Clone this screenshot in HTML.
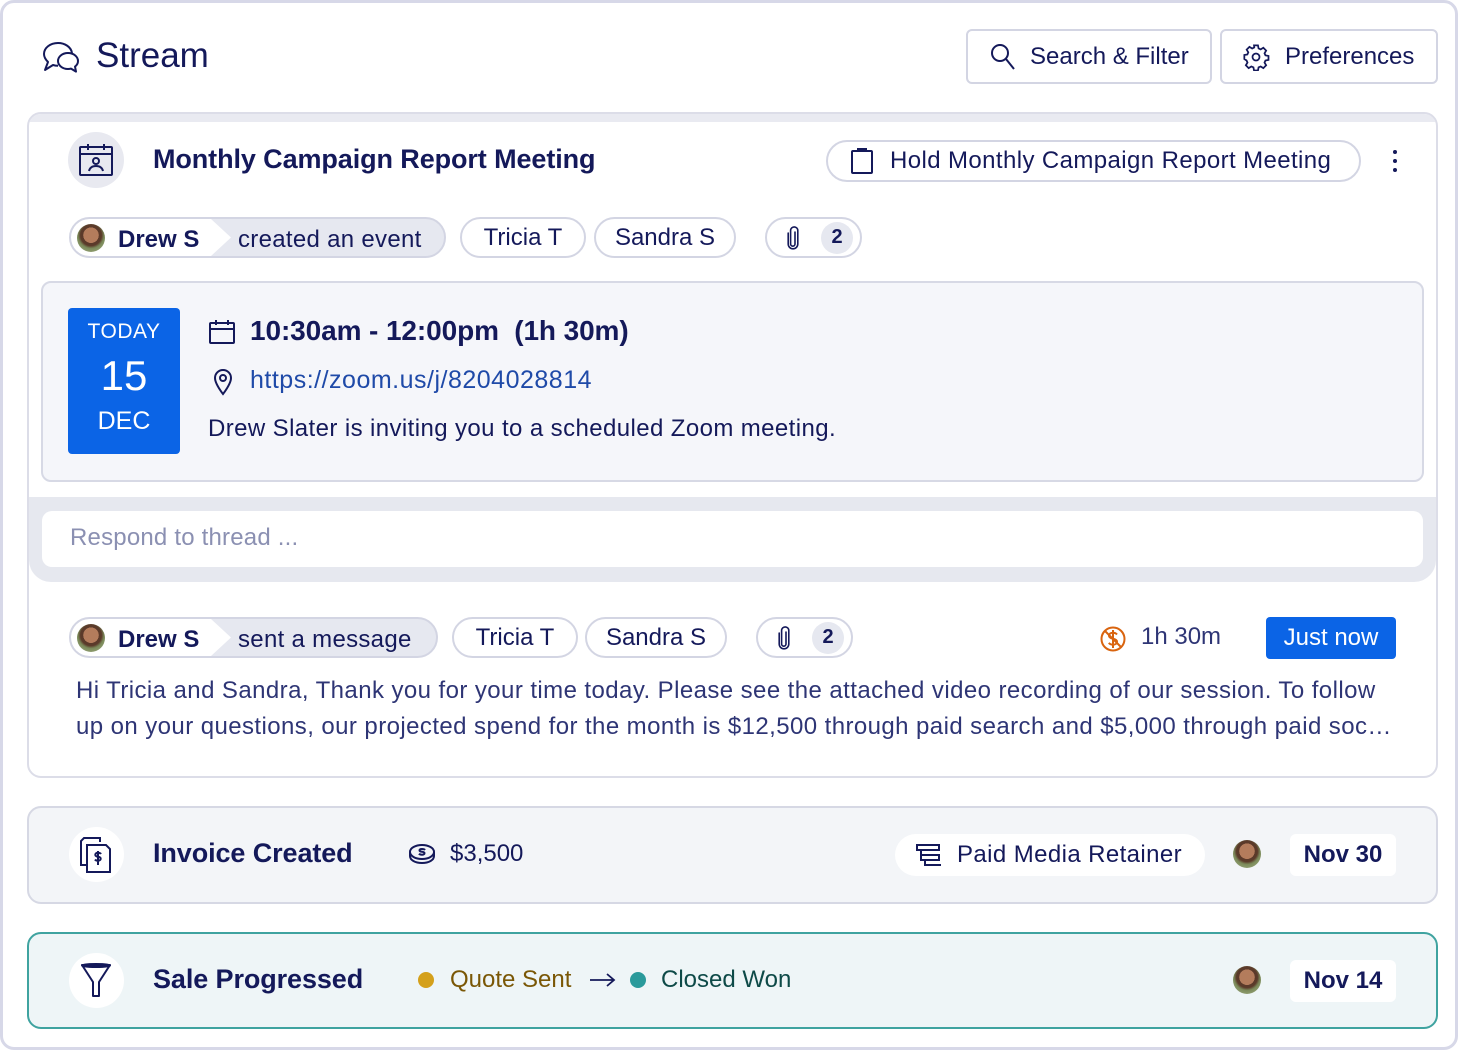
<!DOCTYPE html>
<html><head><meta charset="utf-8">
<style>
*{box-sizing:border-box;margin:0;padding:0}
body{width:1458px;height:1050px;background:#fff;font-family:"Liberation Sans",Arial,sans-serif;color:#14195a;position:relative;overflow:hidden}
.a{position:absolute}
.frame{left:0;top:0;width:1458px;height:1050px;border:3px solid #d7d8e8;border-radius:14px}
.btn{border:2px solid #d3d5e3;border-radius:6px;background:#fff;display:flex;align-items:center;font-size:24px;color:#14195a}
.pill{border:2px solid #d3d5e3;border-radius:22px;background:#fff;display:flex;align-items:center;font-size:24px;color:#14195a;height:41px}
.card{border:2px solid #dcdde8;border-radius:14px}
.av{border-radius:50%;background:radial-gradient(circle at 50% 40%,#b47c5c 0 35%,#5b3a2a 36% 48%,#7b8a5a 60%,#a8b48a 100%)}
.t{white-space:nowrap}
</style></head><body>
<div class="a frame"></div>

<svg class="a" style="left:42px;top:40px" width="40" height="34" viewBox="0 0 40 34" fill="none" stroke="#14195a" stroke-width="2" stroke-linejoin="round">
<path d="M16 3C8 3 2 8 2 14c0 3 2 6 4 8l-3 8 8-5c2 .6 3 .8 5 .8"/>
<path d="M16 3c7 0 13 4 14 10"/>
<path d="M26 13c-6 0-10 4-10 8s4 8 10 8c1 0 2 0 3-.4l5 3-1-5c2-1.5 3-3.5 3-5.6 0-4-4-8-10-8z"/>
</svg>
<div class="a t" style="left:96px;top:36px;font-size:35px">Stream</div>

<div class="a btn" style="left:966px;top:29px;width:246px;height:55px">
<svg style="margin-left:22px" width="26" height="28" viewBox="0 0 26 28" fill="none" stroke="#14195a" stroke-width="2"><circle cx="10" cy="10" r="8"/><path d="M16 16l8 10"/></svg>
<span style="margin-left:14px">Search &amp; Filter</span></div>
<div class="a btn" style="left:1220px;top:29px;width:218px;height:55px">
<svg style="margin-left:20px" width="28" height="28" viewBox="0 0 24 24" fill="none" stroke="#14195a" stroke-width="1.5"><circle cx="12" cy="12" r="3"/><path d="M10.3 2h3.4l.5 2.6 1.8.9 2.3-1.4 2.4 2.4-1.4 2.3.8 1.8 2.6.5v3.4l-2.6.5-.8 1.8 1.4 2.3-2.4 2.4-2.3-1.4-1.8.8-.5 2.7h-3.4l-.5-2.7-1.8-.8-2.3 1.4-2.4-2.4 1.4-2.3-.8-1.8L2 13.7v-3.4l2.6-.5.8-1.8L4 5.7l2.4-2.4 2.3 1.4 1.8-.9z"/></svg>
<span style="margin-left:15px">Preferences</span></div>

<div class="a card" style="left:27px;top:112px;width:1411px;height:666px;background:#fff;overflow:hidden">
 <div class="a" style="left:0;top:0;width:100%;height:8px;background:#e9eaf1"></div>
 <div class="a" style="left:0;top:383px;width:100%;height:85px;background:#e6e8ef;border-radius:0 0 22px 22px"></div>
</div>
<div class="a" style="left:68px;top:132px;width:56px;height:56px;border-radius:50%;background:#e8e9f0"></div>
<svg class="a" style="left:78px;top:143px" width="36" height="34" viewBox="0 0 36 34" fill="none" stroke="#14195a" stroke-width="2"><rect x="2" y="4" width="32" height="28" rx="1"/><path d="M2 11h32M10 1v6M26 1v6"/><circle cx="18" cy="18" r="3"/><path d="M11 28c1-4 4-5 7-5s6 1 7 5"/></svg>
<div class="a t" style="left:153px;top:144px;font-size:27px;font-weight:bold;letter-spacing:-0.1px">Monthly Campaign Report Meeting</div>

<div class="a pill" style="left:826px;top:140px;width:535px;height:42px">
<svg style="margin-left:22px" width="24" height="28" viewBox="0 0 24 28" fill="none" stroke="#14195a" stroke-width="2"><rect x="2" y="4" width="20" height="22" rx="1"/><path d="M8 4V2h8v2"/></svg>
<span style="margin-left:16px;letter-spacing:0.4px">Hold Monthly Campaign Report Meeting</span></div>
<div class="a" style="left:1393px;top:150px;width:4px;height:4px;border-radius:50%;background:#14195a;box-shadow:0 9px 0 #14195a,0 18px 0 #14195a"></div>

<div class="a pill" style="left:69px;top:217px;width:377px;background:#e6e8f0;overflow:hidden">
 <div class="a" style="left:0;top:0;width:160px;height:100%;background:#fff;clip-path:polygon(0 0,140px 0,160px 50%,140px 100%,0 100%);border-radius:20px 0 0 20px"></div>
 <div class="a av" style="left:6px;top:5px;width:28px;height:28px"></div>
 <span class="a t" style="left:47px;top:7px;font-weight:bold">Drew S</span>
 <span class="a t" style="left:167px;top:7px;letter-spacing:0.3px">created an event</span>
</div>
<div class="a pill" style="left:460px;top:217px;width:126px;justify-content:center">Tricia T</div>
<div class="a pill" style="left:594px;top:217px;width:142px;justify-content:center">Sandra S</div>
<div class="a pill" style="left:765px;top:217px;width:97px">
<svg style="margin-left:18px" width="16" height="26" viewBox="0 0 16 26" fill="none" stroke="#14195a" stroke-width="1.6" stroke-linecap="round"><path d="M10 7v12a2.2 2.2 0 0 1-4.4 0V5.5a3.6 3.6 0 0 1 7.2 0V19a4.8 4.8 0 0 1-9.6 0V8"/></svg>
<span style="margin-left:20px;width:32px;height:32px;border-radius:50%;background:#e6e8f0;display:flex;align-items:center;justify-content:center;font-size:20px;font-weight:bold">2</span></div>

<div class="a" style="left:41px;top:281px;width:1383px;height:201px;background:#f5f6fa;border:2px solid #d7d9e5;border-radius:10px"></div>
<div class="a" style="left:68px;top:308px;width:112px;height:146px;background:#0b64e6;border-radius:4px;color:#fff;text-align:center">
 <div style="font-size:21px;margin-top:12px;line-height:24px;letter-spacing:0.5px">TODAY</div>
 <div style="font-size:42px;margin-top:10px;line-height:44px">15</div>
 <div style="font-size:25px;margin-top:9px;line-height:28px">DEC</div>
</div>
<svg class="a" style="left:208px;top:319px" width="28" height="26" viewBox="0 0 28 26" fill="none" stroke="#14195a" stroke-width="2"><rect x="2" y="4" width="24" height="20" rx="1"/><path d="M2 10h24M8 1v5M20 1v5"/></svg>
<div class="a t" style="left:250px;top:315px;font-size:28px;font-weight:bold;letter-spacing:-0.1px">10:30am - 12:00pm &nbsp;(1h 30m)</div>
<svg class="a" style="left:212px;top:368px" width="22" height="28" viewBox="0 0 22 28" fill="none" stroke="#14195a" stroke-width="2"><path d="M11 26S3 16 3 10a8 8 0 0 1 16 0c0 6-8 16-8 16z"/><circle cx="11" cy="10" r="3"/></svg>
<div class="a t" style="left:250px;top:366px;font-size:25px;color:#1f4aa8;letter-spacing:0.5px">https://zoom.us/j/8204028814</div>
<div class="a t" style="left:208px;top:415px;font-size:24px;letter-spacing:0.4px">Drew Slater is inviting you to a scheduled Zoom meeting.</div>

<div class="a" style="left:42px;top:511px;width:1381px;height:56px;background:#fff;border-radius:10px"></div>
<div class="a t" style="left:70px;top:524px;font-size:24px;color:#8b90b2;letter-spacing:0.2px">Respond to thread ...</div>

<div class="a pill" style="left:69px;top:617px;width:369px;background:#e6e8f0;overflow:hidden">
 <div class="a" style="left:0;top:0;width:160px;height:100%;background:#fff;clip-path:polygon(0 0,140px 0,160px 50%,140px 100%,0 100%);border-radius:20px 0 0 20px"></div>
 <div class="a av" style="left:6px;top:5px;width:28px;height:28px"></div>
 <span class="a t" style="left:47px;top:7px;font-weight:bold">Drew S</span>
 <span class="a t" style="left:167px;top:7px;letter-spacing:0.3px">sent a message</span>
</div>
<div class="a pill" style="left:452px;top:617px;width:126px;justify-content:center">Tricia T</div>
<div class="a pill" style="left:585px;top:617px;width:142px;justify-content:center">Sandra S</div>
<div class="a pill" style="left:756px;top:617px;width:97px">
<svg style="margin-left:18px" width="16" height="26" viewBox="0 0 16 26" fill="none" stroke="#14195a" stroke-width="1.6" stroke-linecap="round"><path d="M10 7v12a2.2 2.2 0 0 1-4.4 0V5.5a3.6 3.6 0 0 1 7.2 0V19a4.8 4.8 0 0 1-9.6 0V8"/></svg>
<span style="margin-left:20px;width:32px;height:32px;border-radius:50%;background:#e6e8f0;display:flex;align-items:center;justify-content:center;font-size:20px;font-weight:bold">2</span></div>
<svg class="a" style="left:1099px;top:625px" width="28" height="28" viewBox="0 0 28 28" fill="none" stroke="#d9640f" stroke-width="2"><circle cx="14" cy="14" r="11.5"/><path d="M6 6l16 16"/><path d="M18 9.5c-1-1.3-2.5-1.8-4-1.8-2.4 0-4 1.2-4 3s1.6 2.5 4 3 4 1.3 4 3-1.6 3-4 3c-1.7 0-3.2-.6-4.2-1.8M14 5v18"/></svg>
<div class="a t" style="left:1141px;top:623px;font-size:24px;color:#2e3575">1h 30m</div>
<div class="a" style="left:1266px;top:617px;width:130px;height:42px;background:#0b64e6;border-radius:4px;color:#fff;font-size:24px;display:flex;align-items:center;justify-content:center">Just now</div>
<div class="a" style="left:76px;top:673px;width:1330px;font-size:24px;line-height:36px;color:#2e3575;white-space:nowrap;overflow:hidden;text-overflow:ellipsis;letter-spacing:0.42px">Hi Tricia and Sandra, Thank you for your time today. Please see the attached video recording of our session. To follow</div>
<div class="a" style="left:76px;top:709px;width:1318px;font-size:24px;line-height:36px;color:#2e3575;white-space:nowrap;overflow:hidden;text-overflow:ellipsis;letter-spacing:0.42px">up on your questions, our projected spend for the month is $12,500 through paid search and $5,000 through paid social media.</div>

<div class="a card" style="left:27px;top:806px;width:1411px;height:98px;background:#f3f5f8;border-color:#d6d8e4"></div>
<div class="a" style="left:69px;top:827px;width:55px;height:55px;border-radius:50%;background:#fff"></div>
<svg class="a" style="left:80px;top:836px" width="32" height="38" viewBox="0 0 32 38" fill="none" stroke="#14195a" stroke-width="2"><path d="M20 6V2H4l-3 3v24h6"/><path d="M7 9h19l4 4v23H7z"/><path d="M21 18c-.6-1-1.7-1.3-3-1.3-1.6 0-2.7.8-2.7 2s1 1.7 2.7 2 2.7.9 2.7 2-1.1 2-2.7 2c-1.3 0-2.4-.4-3-1.2M18 15v14"/></svg>
<div class="a t" style="left:153px;top:838px;font-size:27px;font-weight:bold;letter-spacing:-0.1px">Invoice Created</div>
<svg class="a" style="left:408px;top:843px" width="28" height="22" viewBox="0 0 28 22" fill="none" stroke="#14195a" stroke-width="2"><ellipse cx="14" cy="9" rx="12" ry="7"/><path d="M2 9v4c0 4 5 7 12 7s12-3 12-7V9"/><path d="M17 7c-.6-.8-1.7-1-3-1-1.6 0-2.5.6-2.5 1.4s1 1.2 2.5 1.4 2.5.6 2.5 1.4-1 1.5-2.5 1.5c-1.3 0-2.4-.3-3-1"/></svg>
<div class="a t" style="left:450px;top:840px;font-size:24px">$3,500</div>
<div class="a" style="left:895px;top:834px;width:310px;height:42px;background:#fff;border-radius:21px;display:flex;align-items:center;font-size:24px">
<svg style="margin-left:20px" width="28" height="26" viewBox="0 0 28 26" fill="none" stroke="#14195a" stroke-width="2"><path d="M2 3h22v5H2zM6 8v5h18v5H6V8M10 18v5h16"/></svg>
<span style="margin-left:14px;letter-spacing:0.4px">Paid Media Retainer</span></div>
<div class="a av" style="left:1233px;top:840px;width:28px;height:28px"></div>
<div class="a" style="left:1290px;top:834px;width:106px;height:42px;background:#fff;border-radius:6px;font-size:24px;font-weight:bold;display:flex;align-items:center;justify-content:center">Nov 30</div>

<div class="a card" style="left:27px;top:932px;width:1411px;height:97px;background:#eef5f7;border-color:#3fa3a0"></div>
<div class="a" style="left:69px;top:953px;width:55px;height:55px;border-radius:50%;background:#fff"></div>
<svg class="a" style="left:80px;top:962px" width="32" height="36" viewBox="0 0 32 36" fill="none" stroke="#14195a" stroke-width="2" stroke-linejoin="round"><path d="M2 3h28L19 20v14h-6V20z"/><ellipse cx="16" cy="3.5" rx="14" ry="1.5"/></svg>
<div class="a t" style="left:153px;top:964px;font-size:27px;font-weight:bold;letter-spacing:-0.1px">Sale Progressed</div>
<div class="a" style="left:418px;top:972px;width:16px;height:16px;border-radius:50%;background:#d4a01b"></div>
<div class="a t" style="left:450px;top:966px;font-size:24px;color:#7a5706">Quote Sent</div>
<svg class="a" style="left:589px;top:972px" width="27" height="16" viewBox="0 0 27 16" fill="none" stroke="#14195a" stroke-width="1.8"><path d="M1 8h24M18 2l7 6-7 6"/></svg>
<div class="a" style="left:630px;top:972px;width:16px;height:16px;border-radius:50%;background:#2a9a9b"></div>
<div class="a t" style="left:661px;top:966px;font-size:24px;color:#0e4a48">Closed Won</div>
<div class="a av" style="left:1233px;top:966px;width:28px;height:28px"></div>
<div class="a" style="left:1290px;top:960px;width:106px;height:42px;background:#fff;border-radius:6px;font-size:24px;font-weight:bold;display:flex;align-items:center;justify-content:center">Nov 14</div>
</body></html>
